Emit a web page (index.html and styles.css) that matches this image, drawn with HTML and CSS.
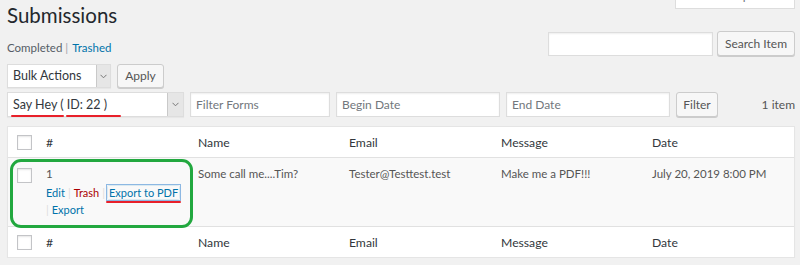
FILE: index.html
```html
<!DOCTYPE html>
<html lang="en">
<head>
<meta charset="utf-8">
<title>Submissions</title>
<link rel="stylesheet" href="styles.css">
</head>
<body>
<div class="wrap">
  <div class="head">
    <h1 class="title">Submissions</h1>
    <div class="screen-options">Screen Options</div>
  </div>

  <div class="bar bar-search">
    <div class="subsubsub"><span class="current">Completed</span><span class="sep">|</span><a class="link">Trashed</a></div>
    <div class="search">
      <span class="input search-input"></span>
      <span class="button">Search Item</span>
    </div>
  </div>

  <div class="bar bar-bulk">
    <div class="select bulk-select">
      <span class="sel-text">Bulk Actions</span>
      <span class="sel-arrow"><svg width="7" height="5" viewBox="0 0 7 5"><path d="M0.5 0.8 L3.5 3.8 L6.5 0.8" fill="none" stroke="#777" stroke-width="1"/></svg></span>
    </div>
    <span class="button">Apply</span>
  </div>

  <div class="bar bar-filter">
    <div class="select form-select">
      <span class="sel-text">Say Hey ( ID: 22 )</span>
      <span class="sel-arrow"><svg width="7" height="5" viewBox="0 0 7 5"><path d="M0.5 0.8 L3.5 3.8 L6.5 0.8" fill="none" stroke="#777" stroke-width="1"/></svg></span>
      <i class="mark mark-a"></i><i class="mark mark-b"></i>
    </div>
    <span class="input filter-forms">Filter Forms</span>
    <span class="input date">Begin Date</span>
    <span class="input date">End Date</span>
    <span class="button">Filter</span>
    <span class="count">1 item</span>
  </div>

  <table class="list">
    <colgroup>
      <col class="c-check"><col class="c-num"><col class="c-name"><col class="c-email"><col class="c-msg"><col class="c-date">
    </colgroup>
    <thead>
      <tr><th class="check"><span class="checkbox"></span></th><th>#</th><th>Name</th><th>Email</th><th>Message</th><th>Date</th></tr>
    </thead>
    <tbody>
      <tr>
        <td class="check"><span class="checkbox"></span></td>
        <td>
          <div class="id">1</div>
          <div class="row-actions"><a class="link">Edit</a><span class="sep">|</span><a class="trash">Trash</a><span class="sep">|</span><a class="link focus">Export to PDF<i class="mark mark-c"></i></a><br><span class="sep first">|</span><a class="link">Export</a></div>
        </td>
        <td>Some call me....Tim?</td>
        <td>Tester@Testtest.test</td>
        <td>Make me a PDF!!!</td>
        <td>July 20, 2019 8:00 PM</td>
      </tr>
    </tbody>
    <tfoot>
      <tr><th class="check"><span class="checkbox"></span></th><th>#</th><th>Name</th><th>Email</th><th>Message</th><th>Date</th></tr>
    </tfoot>
  </table>

  <div class="highlight"></div>
</div>
</body>
</html>
```

FILE: styles.css
```css
html, body {
  margin: 0;
  padding: 0;
  background: #f1f1f1;
}
body {
  font-family: "Lato", "Open Sans", sans-serif;
  font-size: 12px;
  color: #555;
}
.wrap {
  position: relative;
  padding: 0 5px 0 7px;
  width: 788px;
}
.head {
  display: flex;
  justify-content: space-between;
  align-items: flex-start;
  height: 31px;
}
.title {
  margin: 0;
  font-size: 20.5px;
  line-height: 30px;
  font-weight: 400;
  color: #23282d;
}
.screen-options {
  box-sizing: border-box;
  width: 120px;
  height: 28px;
  margin-top: -19px;
  background: #fff;
  border: 1px solid #ddd;
  border-top: none;
  color: #72777c;
  font-size: 12px;
  text-align: center;
  line-height: 30px;
  white-space: nowrap;
}
.bar {
  display: flex;
  align-items: center;
}
.bar-search {
  height: 25px;
  justify-content: space-between;
  align-items: flex-end;
}
.subsubsub {
  font-size: 11.5px;
  line-height: 16px;
  white-space: nowrap;
}
.subsubsub .current { color: #555d66; }
.subsubsub .sep { color: #a0a5aa; margin: 0 4px 0 3px; }
.link { color: #0073aa; }
.trash { color: #a00; }
.search {
  display: flex;
  align-items: center;
  gap: 4px;
  height: 25px;
}
.input {
  box-sizing: border-box;
  display: block;
  height: 24px;
  background: #fff;
  border: 1px solid #ddd;
  box-shadow: inset 0 1px 2px rgba(0,0,0,.07);
  color: #72777c;
  font-size: 12px;
  line-height: 22px;
  padding: 0 5px;
  white-space: nowrap;
}
.search-input { width: 165px; }
.button {
  box-sizing: border-box;
  display: block;
  height: 25px;
  padding: 0 4px;
  background: #f7f7f7;
  border: 1px solid #ccc;
  border-radius: 3px;
  box-shadow: 0 1px 0 #ccc;
  color: #555;
  font-size: 12px;
  line-height: 23px;
  text-align: center;
  white-space: nowrap;
}
.search .button { width: 78px; }
.bar-bulk {
  margin-top: 8px;
  gap: 6px;
  height: 24px;
}
.select {
  position: relative;
  box-sizing: border-box;
  display: flex;
  background: #fff;
  border: 1px solid #ddd;
  box-shadow: 0 1px 1px rgba(0,0,0,.04);
  color: #32373c;
  font-size: 12.5px;
  white-space: nowrap;
}
.sel-text {
  flex: 1;
  padding-left: 5px;
  line-height: 22px;
}
.sel-arrow {
  box-sizing: border-box;
  display: flex;
  align-items: center;
  justify-content: center;
  background: #e6e6e6;
  border-left: 1px solid #c9c9c9;
}
.bulk-select { width: 104px; height: 24px; }
.bulk-select .sel-arrow { width: 14px; }
.bar-bulk .button { width: 47px; height: 24px; line-height: 22px; font-size: 12px; }
.bar-filter {
  margin-top: 4px;
  gap: 6px;
  height: 25px;
}
.form-select { width: 177px; height: 25px; }
.form-select .sel-text { line-height: 23px; }
.form-select .sel-arrow { width: 16px; }
.bar-filter .input { height: 25px; line-height: 23px; }
.filter-forms { width: 140px; }
.date { width: 164px; }
.bar-filter .button { width: 42px; }
.count {
  margin-left: auto;
  color: #555;
  font-size: 12px;
}
.mark {
  position: absolute;
  height: 2px;
  background: #e8202a;
  border-radius: 1px;
}
.mark-a { left: 3px; top: 22px; width: 53px; }
.mark-b { left: 58px; top: 22px; width: 55px; }

.list {
  margin-top: 9px;
  width: 788px;
  table-layout: fixed;
  border-collapse: separate;
  border-spacing: 0;
  background: #fff;
  border: 1px solid #e5e5e5;
  box-shadow: 0 1px 1px rgba(0,0,0,.04);
}
.c-check { width: 30px; }
.c-num { width: 152px; }
.c-name { width: 151px; }
.c-email { width: 152px; }
.c-msg { width: 151px; }
.c-date { width: 150px; }
.list th {
  height: 30px;
  padding: 0 8px;
  text-align: left;
  font-weight: 400;
  font-size: 12.2px;
  color: #32373c;
  vertical-align: middle;
}
.list thead th { border-bottom: 1px solid #e1e1e1; }
.list tfoot th { border-top: 1px solid #e1e1e1; }
.list th.check, .list td.check { padding: 0 0 0 9px; }
.list tbody tr { background: #f9f9f9; }
.list td {
  height: 68px;
  box-sizing: border-box;
  vertical-align: top;
  padding: 6px 8px 0;
  font-size: 11.5px;
  line-height: 20px;
  color: #555;
  white-space: nowrap;
}
.list td.check { padding-top: 10px; }
.checkbox {
  box-sizing: border-box;
  display: block;
  width: 15px;
  height: 15px;
  background: #fff;
  border: 1px solid #c3c4c7;
  box-shadow: inset 0 1px 2px rgba(0,0,0,.1);
}
.row-actions {
  line-height: 17px;
  font-size: 11px;
  white-space: nowrap;
}
.row-actions .sep { color: #ddd; margin: 0 3px; }
.row-actions .sep.first { margin-left: 0; margin-right: 3px; }
.focus {
  position: relative;
  padding: 0 1px;
  outline: 1px solid #8db8e3;
  outline-offset: 1px;
  box-shadow: 0 0 2px rgba(30,140,190,.4);
}
.mark-c { left: -2px; right: -2px; bottom: -4px; }
.highlight {
  position: absolute;
  left: 10px;
  top: 159px;
  width: 183px;
  height: 69px;
  box-sizing: border-box;
  border: 3px solid #22a83f;
  border-radius: 11px;
}
```
